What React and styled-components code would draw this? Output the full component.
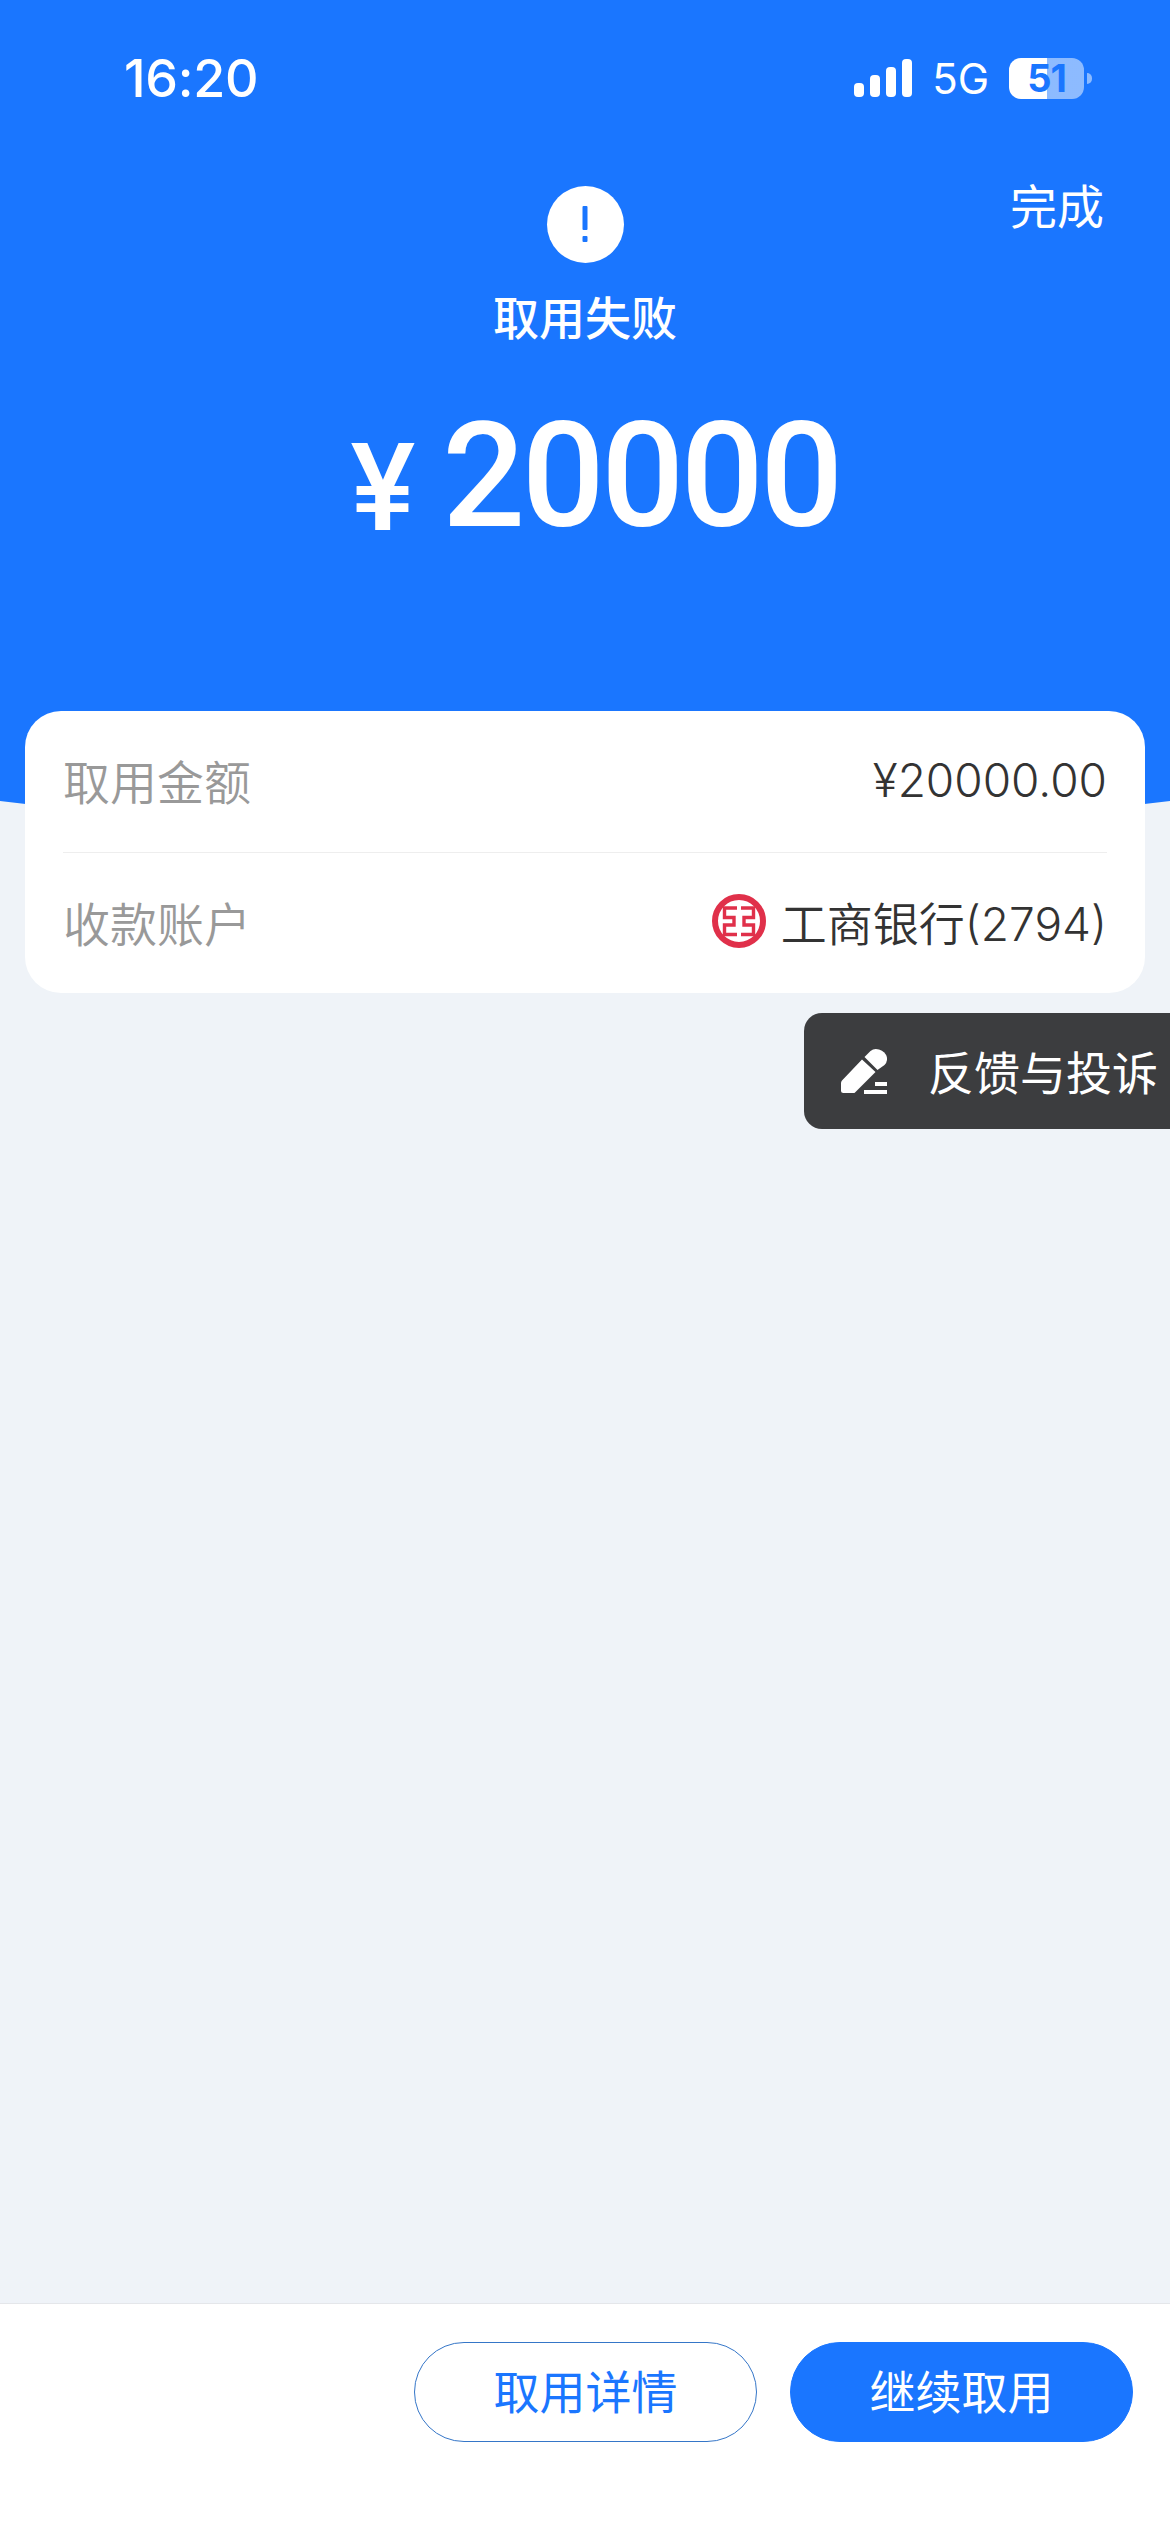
import styled, { createGlobalStyle } from "styled-components";

const GlobalStyle = createGlobalStyle`
  body {
    margin: 0;
    background: #eff3f8;
    font-family: "Inter", "Noto Sans CJK SC", sans-serif;
  }
`;

const Page = styled.div`
  width: 1170px;
  height: 2532px;
  display: flex;
  flex-direction: column;
  overflow: hidden;
`;

const Hero = styled.header`
  height: 836px;
  flex: none;
  background: #1a76ff;
  color: #fff;
  clip-path: ellipse(2045px 836px at 50% 0);
  display: flex;
  flex-direction: column;
  align-items: center;
`;

const StatusBar = styled.div`
  align-self: stretch;
  height: 156px;
  padding: 0 86px 0 124px;
  display: flex;
  align-items: center;
  justify-content: space-between;
`;

const Time = styled.span`
  font-size: 52px;
  font-weight: 500;
  letter-spacing: -0.3px;
`;

const StatusIcons = styled.div`
  display: flex;
  align-items: center;
  gap: 20px;
`;

const Network = styled.span`
  font-size: 42px;
  font-weight: 400;
`;

const Battery = styled.div`
  width: 75px;
  height: 41px;
  border-radius: 12px;
  background: linear-gradient(90deg, #fff 0 38px, rgba(255, 255, 255, 0.5) 38px);
  color: #1a76ff;
  font-size: 38px;
  font-weight: 700;
  line-height: 41px;
  letter-spacing: -1px;
  text-align: center;
  position: relative;

  &::after {
    content: "";
    position: absolute;
    left: 78px;
    top: 15px;
    width: 5px;
    height: 11px;
    border-radius: 0 6px 6px 0;
    background: rgba(255, 255, 255, 0.5);
  }
`;

const TopRow = styled.div`
  align-self: stretch;
  margin-top: 30px;
  padding: 0 66px;
  display: grid;
  grid-template-columns: 1fr auto 1fr;
`;

const AlertBadge = styled.div`
  grid-column: 2;
  width: 77px;
  height: 77px;
  border-radius: 50%;
  background: #fff;
  display: flex;
  align-items: center;
  justify-content: center;
`;

const Done = styled.button`
  justify-self: end;
  align-self: start;
  border: 0;
  padding: 0;
  background: none;
  color: #fff;
  font: 400 47px/47px "Noto Sans CJK SC", sans-serif;
  margin-top: -6px;
`;

const Title = styled.h1`
  margin: 20px 0 0;
  font: 500 46px/64px "Noto Sans CJK SC", sans-serif;
`;

const Amount = styled.div`
  margin-top: 55px;
  margin-left: 20px;
  height: 150px;
  display: flex;
  align-items: center;
  gap: 27px;
  font-family: "Roboto", sans-serif;
  font-weight: 500;
  color: #fff;
`;

const Currency = styled.span`
  font-size: 122px;
  line-height: 1;
  margin-top: 24px;
`;

const Digits = styled.span`
  font-size: 146px;
  line-height: 1;
  letter-spacing: -3.500px;
`;

const Card = styled.section`
  position: relative;
  margin: -125px 25px 0;
  padding: 0 38px;
  height: 282px;
  flex: none;
  border-radius: 36px;
  background: #fff;
  display: flex;
  flex-direction: column;
`;

const Row = styled.div`
  flex: 1;
  padding-bottom: 3px;
  display: flex;
  align-items: center;
  justify-content: space-between;
  font-size: 46px;
  font-weight: 350;

  & + & {
    border-top: 1px solid #eeeeee;
  }
`;

const Label = styled.span`
  color: #999;
  font-size: 47px;
`;

const Value = styled.span`
  color: #333;
  display: flex;
  align-items: center;
  gap: 15px;
`;

const Feedback = styled.button`
  align-self: flex-end;
  margin-top: 20px;
  width: 366px;
  height: 116px;
  border: 0;
  padding: 0 0 3px 37px;
  border-radius: 18px 0 0 18px;
  background: #3c3d3f;
  color: #fff;
  display: flex;
  align-items: center;
  gap: 41px;
  font: 400 46px "Noto Sans CJK SC", sans-serif;

  svg {
    margin-top: 3px;
  }
`;

const BottomBar = styled.footer`
  margin-top: auto;
  height: 229px;
  flex: none;
  box-sizing: border-box;
  border-top: 1px solid #e4e6ea;
  background: #fff;
  padding: 38px 37px 0 0;
  display: flex;
  justify-content: flex-end;
  align-items: flex-start;
  gap: 33px;
`;

const ActionButton = styled.button`
  width: 343px;
  height: 100px;
  box-sizing: border-box;
  border-radius: 50px;
  border: 1px solid ${(props) => (props.$primary ? "#1a76ff" : "#3576c8")};
  background: ${(props) => (props.$primary ? "#1a76ff" : "#fff")};
  color: ${(props) => (props.$primary ? "#fff" : "#1a76ff")};
  font: 400 46px "Noto Sans CJK SC", sans-serif;
  padding: 0 0 6px;
`;

const SignalIcon = () => (
  <svg width="58" height="38" viewBox="0 0 58 38" fill="#fff">
    <rect x="0" y="24" width="10" height="14" rx="4" />
    <rect x="16" y="16" width="10" height="22" rx="4" />
    <rect x="32" y="8" width="10" height="30" rx="4" />
    <rect x="48" y="0" width="10" height="38" rx="4" />
  </svg>
);

const BangIcon = () => (
  <svg width="8" height="37" viewBox="0 0 8 37" fill="#1a76ff">
    <rect x="1.500" y="0" width="5" height="24" rx="1" />
    <rect x="1.500" y="30" width="5" height="6" rx="1" />
  </svg>
);

const IcbcLogo = () => (
  <svg width="54" height="54" viewBox="0 0 54 54" fill="none" stroke="#e0304a">
    <circle cx="27" cy="27" r="24" strokeWidth="6" />
    <path d="M25 14H12.500V23.500H22V31H12.500V40.500H25" strokeWidth="3.400" />
    <path d="M29 14H41.500V23.500H32V31H41.500V40.500H29" strokeWidth="3.400" />
  </svg>
);

const PencilIcon = () => (
  <svg width="46" height="45" viewBox="0 0 46 45" fill="#fff">
    <path d="M1 31.500L21 10.500L34.500 23L14 43.500Q13.500 44 12.500 44H2.500Q0 44 0 41.500V34Q0 32.500 1 31.500Z" />
    <path d="M23.500 8L29.500 2Q33 -1 38 0.500Q44.500 2.500 46 8.500Q46.500 13 43.500 16L36.500 21Z" />
    <rect x="34" y="33" width="12" height="4" />
    <rect x="23" y="41" width="23" height="4" />
  </svg>
);

export default function App() {
  return (
    <Page>
      <GlobalStyle />
      <Hero>
        <StatusBar>
          <Time>16:20</Time>
          <StatusIcons>
            <SignalIcon />
            <Network>5G</Network>
            <Battery>51</Battery>
          </StatusIcons>
        </StatusBar>
        <TopRow>
          <AlertBadge>
            <BangIcon />
          </AlertBadge>
          <Done>完成</Done>
        </TopRow>
        <Title>取用失败</Title>
        <Amount>
          <Currency>¥</Currency>
          <Digits>20000</Digits>
        </Amount>
      </Hero>
      <Card>
        <Row>
          <Label>取用金额</Label>
          <Value>¥20000.00</Value>
        </Row>
        <Row>
          <Label>收款账户</Label>
          <Value>
            <IcbcLogo />
            工商银行(2794)
          </Value>
        </Row>
      </Card>
      <Feedback>
        <PencilIcon />
        反馈与投诉
      </Feedback>
      <BottomBar>
        <ActionButton>取用详情</ActionButton>
        <ActionButton $primary>继续取用</ActionButton>
      </BottomBar>
    </Page>
  );
}
